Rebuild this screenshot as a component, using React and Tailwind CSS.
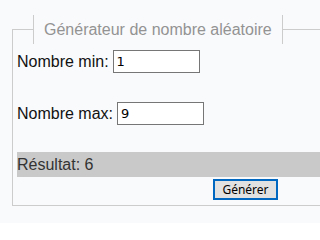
const App = () => {
  return (
    <div className="h-[223px] w-full overflow-hidden bg-[#f9fafc] pl-3 pt-[15px] font-['Liberation_Sans',Arial,sans-serif]">
      <fieldset className="w-[400px] border border-[#cccccc] px-1 pb-[5px]">
        <legend className="ml-4 border-x border-[#cccccc] px-[10px] py-[5px] text-[16px] leading-[19px] text-[#939393]">
          Générateur de nombre aléatoire
        </legend>

        <div className="mt-[6px] flex h-[23px] items-center gap-[4px] text-[16px] text-[#111]">
          <label htmlFor="min">Nombre min:</label>
          <input id="min" type="text" defaultValue="1"
            className="h-[23px] w-[87px] border border-[#767676] bg-white px-[3px] font-['DejaVu_Sans',sans-serif] text-[13px] text-black outline-none" />
        </div>

        <div className="mt-[29px] flex h-[23px] items-center gap-[4px] text-[16px] text-[#111]">
          <label htmlFor="max">Nombre max:</label>
          <input id="max" type="text" defaultValue="9"
            className="h-[23px] w-[87px] border border-[#767676] bg-white px-[3px] font-['DejaVu_Sans',sans-serif] text-[13px] text-black outline-none" />
        </div>

        <div className="mt-[27px] flex h-[25px] items-center bg-[#c9c9c9] text-[16px] text-[#333]">
          Résultat: 6
        </div>

        <button type="button"
          className="ml-[196px] mt-[2px] flex h-[21px] w-[65px] items-center justify-center border-2 border-[#0067c0] bg-[#e1e1e1] font-['Noto_Sans',sans-serif] text-[12px] text-black">
          Générer
        </button>
      </fieldset>
    </div>
  );
};

export default App;
